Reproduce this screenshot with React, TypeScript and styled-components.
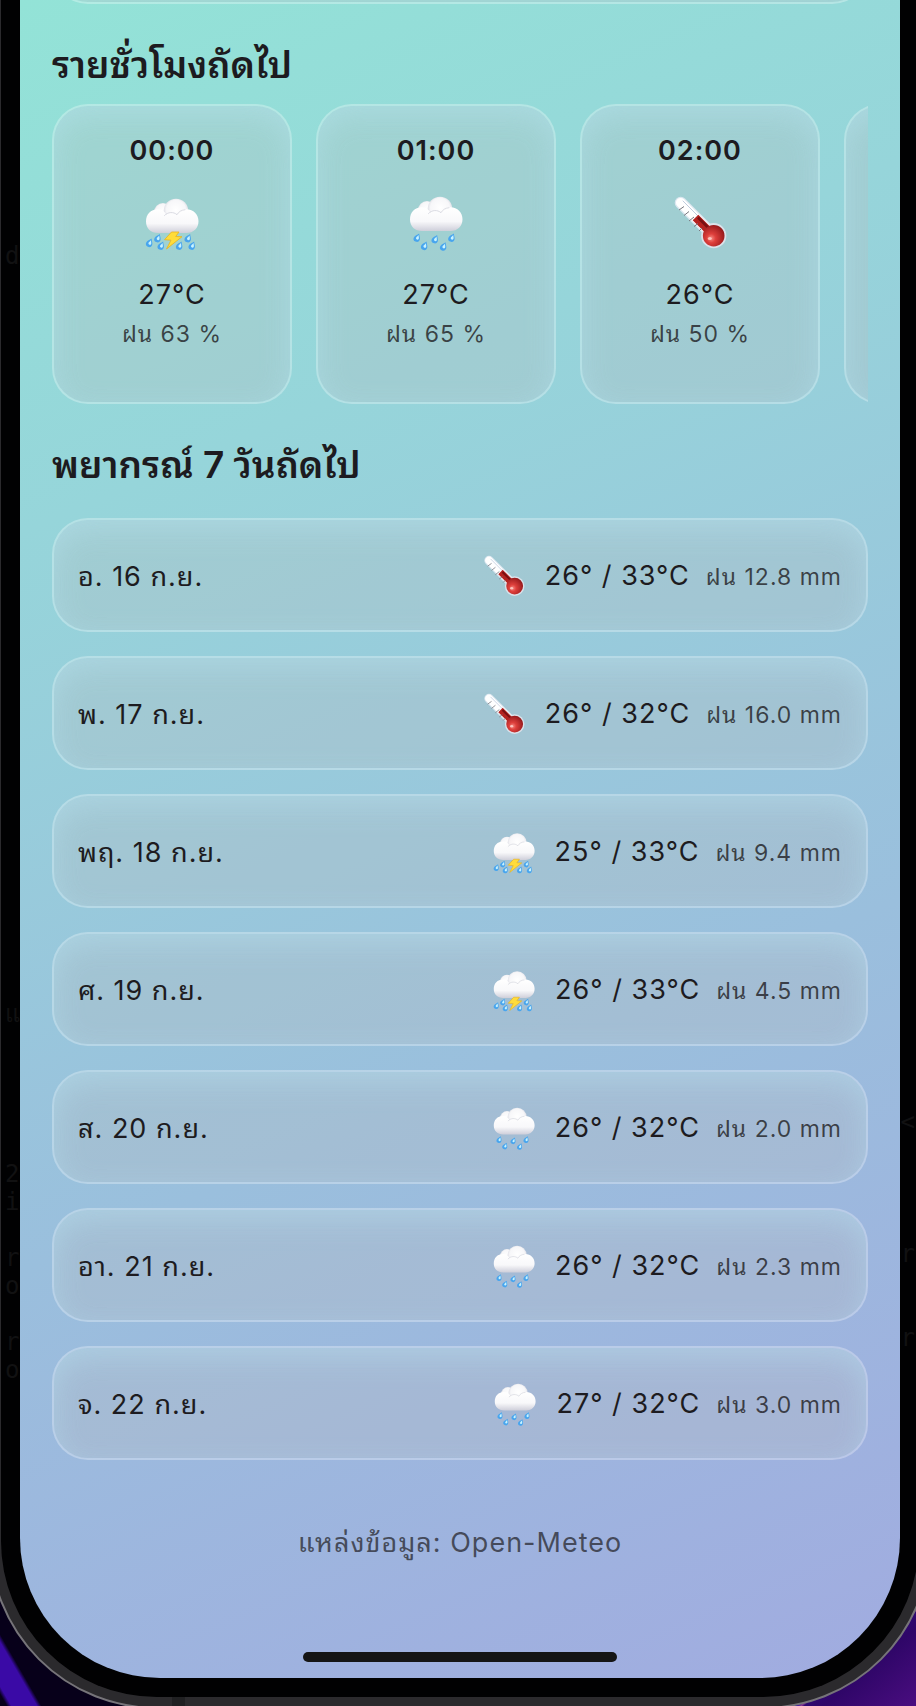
import React, { useId } from 'react';
import styled, { createGlobalStyle } from 'styled-components';

const INK = '#1d1b20';
const MUTED = 'rgba(29, 27, 32, 0.78)';

const GlobalStyle = createGlobalStyle`
  *, *::before, *::after { box-sizing: border-box; }
  body {
    margin: 0;
    background: #000;
    color: ${INK};
    font-family: Inter, "Noto Sans Thai Looped", Thonburi, Loma, Waree, Garuda, "Noto Sans", sans-serif;
  }
`;

const Desktop = styled.div`
  min-height: 100vh;
  overflow: hidden;
  background:
    linear-gradient(60deg, #07001a 0 6px, #3a0aa6 10px 32px, #07001a 36px) 0 0 / 50% 100% no-repeat,
    linear-gradient(320deg, #4a0d80 0, #2f0668 60px, #2e0870 72px, #8a3a90 74px, #2408a8 77px, #2408a8 110px, #0a0020 190px);
`;

const PhoneFrame = styled.div`
  margin: -201px -15px -3px -11px;
  padding: 210px 10px 10px;
  border: 2px solid #767479;
  border-radius: 168px;
  background:
    linear-gradient(#202022, #202022) 181px 100% / 13px 11px no-repeat,
    #2b2a2d;
`;

const Bezel = styled.div`
  position: relative;
  margin-top: -11px;
  padding: 0 19px 19px;
  border-radius: 0 0 156px 156px;
  background: #010102;
  overflow: hidden;
`;

const Reflection = styled.span<{ $top: number; $side?: 'left' | 'right' }>`
  position: absolute;
  top: ${({ $top }) => $top}px;
  ${({ $side = 'left' }) => $side}: 4px;
  color: #111112;
  font: 24px/28px "DejaVu Sans Mono", monospace;
  white-space: pre;
`;

const Screen = styled.main`
  position: relative;
  display: flex;
  flex-direction: column;
  padding: 0 32px 16px;
  border-radius: 0 0 140px 140px;
  overflow: hidden;
  background: linear-gradient(157deg, #93e3d7 0%, #96d5da 26%, #9abfdd 62%, #a1abe0 100%);
`;

const Glass = styled.div`
  border: 2px solid rgba(255, 255, 255, 0.3);
  border-radius: 36px;
  background: rgba(184, 188, 192, 0.3);
  background-clip: padding-box;
  box-shadow: inset 0 10px 28px rgba(185, 230, 245, 0.4);
`;

const CurrentCard = styled(Glass)`
  height: 80px;
  margin-top: -76px;
`;

const Heading = styled.h2`
  margin: 33px 0 11px;
  font-size: 37px;
  line-height: 56px;
  font-weight: 600;
`;

const HourStrip = styled.ul`
  display: flex;
  gap: 24px;
  margin: 0;
  padding: 0;
  overflow: hidden;
  list-style: none;
`;

const HourCard = styled(Glass).attrs({ as: 'li' })`
  flex: 0 0 240px;
  display: flex;
  flex-direction: column;
  align-items: center;
  height: 300px;
  padding-top: 25px;
  letter-spacing: 1px;
`;

const HourTime = styled.time`
  font-size: 27px;
  line-height: 40px;
  font-weight: 600;
`;

const HourIcon = styled.span`
  width: 54px;
  height: 54px;
  margin: 26px 0;
`;

const Temperature = styled.span`
  font-size: 27px;
  line-height: 36px;
  letter-spacing: 1px;
`;

const Rain = styled.span`
  color: ${MUTED};
  font-size: 23px;
  line-height: 42px;
  letter-spacing: 1px;
`;

const DayList = styled.ul`
  display: flex;
  flex-direction: column;
  gap: 24px;
  margin: 14px 0 0;
  padding: 0;
  list-style: none;
`;

const DayRow = styled(Glass).attrs({ as: 'li' })`
  display: flex;
  align-items: center;
  padding: 36px 24px 32px;
`;

const DayName = styled.span`
  flex: 1;
  font-size: 27px;
  line-height: 42px;
  letter-spacing: 1px;
`;

const DayIcon = styled.span`
  width: 42px;
  height: 42px;
  margin-right: 20px;
`;

const DayValues = styled.span`
  display: flex;
  align-items: baseline;
  gap: 16px;
`;

const Source = styled.footer`
  margin-top: 63px;
  color: rgba(29, 27, 32, 0.7);
  font-size: 27px;
  line-height: 40px;
  letter-spacing: 1px;
  text-align: center;
`;

const HomeIndicator = styled.div`
  align-self: center;
  width: 314px;
  height: 10px;
  margin-top: 89px;
  border-radius: 5px;
  background: #151515;
`;

const Drawing = styled.svg`
  display: block;
  width: 100%;
  height: 100%;
  overflow: visible;
`;

type Kind = 'storm' | 'rain' | 'thermometer';

const Cloud = ({ id }: { id: string }) => (
  <g>
    <defs>
      <linearGradient id={`${id}body`} x1="0" y1="0" x2="0" y2="1">
        <stop offset="0" stopColor="#ffffff" />
        <stop offset="0.6" stopColor="#f8f8fa" />
        <stop offset="1" stopColor="#cfcfda" />
      </linearGradient>
      <radialGradient id={`${id}puff`} cx="0.5" cy="0.45" r="0.55">
        <stop offset="0" stopColor="#ffffff" />
        <stop offset="0.7" stopColor="#f7f7f9" />
        <stop offset="1" stopColor="#d7d7e0" />
      </radialGradient>
    </defs>
    <circle cx="18" cy="15" r="9" fill={`url(#${id}puff)`} />
    <circle cx="31" cy="14" r="12.3" fill={`url(#${id}puff)`} />
    <path
      d="M13 12.3C5.5 12.3 1 17.5 1 24.5c0 7 5 11.5 12 11.5h28.500c7 0 12-5 12-11.800 0-7-5-12-12-12-4.500 0-8 2-10 5-3.500-2.500-8-2-10 .5-1.800-3.200-4.800-5.400-8.500-5.400z"
      fill={`url(#${id}body)`}
    />
    <path
      d="M19.500 18.500c3.500-3.800 9-3.800 12.500-.8 1.600-3 4.500-4.700 8-5"
      fill="none"
      stroke="#cdced8"
      strokeWidth="0.900"
      strokeLinecap="round"
      opacity="0.800"
    />
  </g>
);

const Drop = ({ x, y }: { x: number; y: number }) => (
  <g transform={`translate(${x} ${y}) rotate(24)`}>
    <path d="M0-4.500C1-2.500 3.200-.8 3.200 1.300A3.200 3.200 0 0 1-3.200 1.300C-3.200-.8-1-2.500 0-4.500z" fill="#48a5ee" />
    <path d="M.1-2.800C.8-1.400 1.900-.5 1.900.8A1.500 1.500 0 0 1-1 .9C-1-.4-.2-1.500.1-2.800z" fill="#c9f3ff" />
  </g>
);

const STORM_DROPS = [[4.700, 45.700], [13, 41], [16.300, 48.500], [34.700, 48.500], [43.300, 41], [47.300, 48.500]];
const RAIN_DROPS = [[8.300, 40.500], [26.300, 42], [43, 40.500], [15.700, 48.700], [34.700, 49.300]];

const WeatherIcon = ({ kind }: { kind: Kind }) => {
  const id = useId().replace(/[^a-zA-Z0-9]/g, '');
  if (kind === 'thermometer') {
    return (
      <Drawing viewBox="0 0 54 54" role="img" aria-label="thermometer">
        <defs>
          <radialGradient id={`${id}bulb`} cx="0.38" cy="0.62" r="0.7">
            <stop offset="0" stopColor="#f58a82" />
            <stop offset="0.3" stopColor="#de3f3b" />
            <stop offset="1" stopColor="#8d1518" />
          </radialGradient>
        </defs>
        <path d="M7.700 5.700L40.700 38.700" stroke="#dce7f0" strokeWidth="12" strokeLinecap="round" />
        <circle cx="40.700" cy="38.700" r="12.600" fill="#dbe2ea" />
        <path d="M7.700 5.700L38 36" stroke="#ffffff" strokeWidth="9.500" strokeLinecap="round" />
        <path d="M10 4L33 27" stroke="#b9c6da" strokeWidth="0.900" strokeLinecap="round" />
        <path d="M22.500 20.500L38 36" stroke="#b5221f" strokeWidth="8" />
        <path d="M25 20.500L38 33.500" stroke="#791012" strokeWidth="2.500" />
        <path d="M6 13l5-3.500M11 18.500l5-4M16 24l5-4M21 29.500l4-3M26 34l3-3" stroke="#77777e" strokeWidth="1" />
        <circle cx="40.700" cy="38.700" r="10.800" fill={`url(#${id}bulb)`} />
        <ellipse cx="36.800" cy="41.500" rx="2" ry="1.600" fill="#ffd0ca" opacity="0.850" />
      </Drawing>
    );
  }
  const storm = kind === 'storm';
  return (
    <Drawing viewBox="0 0 54 54" role="img" aria-label={kind}>
      <g transform={storm ? undefined : 'translate(0 -2)'}>
        <Cloud id={id} />
      </g>
      {(storm ? STORM_DROPS : RAIN_DROPS).map(([x, y]) => (
        <Drop key={`${x}-${y}`} x={x} y={y} />
      ))}
      {storm && (
        <path
          d="M26.500 35L34 35L30.700 39.500L37 39.700L21.500 52L26 43.200L19.500 42.700z"
          fill="#ffdc3a"
          stroke="#e9b21e"
          strokeWidth="0.800"
          strokeLinejoin="round"
        />
      )}
    </Drawing>
  );
};

const HOURS: { time: string; kind: Kind; temp: string; rain: string }[] = [
  { time: '00:00', kind: 'storm', temp: '27°C', rain: 'ฝน 63 %' },
  { time: '01:00', kind: 'rain', temp: '27°C', rain: 'ฝน 65 %' },
  { time: '02:00', kind: 'thermometer', temp: '26°C', rain: 'ฝน 50 %' },
];

const DAYS: { day: string; kind: Kind; temp: string; rain: string }[] = [
  { day: 'อ. 16 ก.ย.', kind: 'thermometer', temp: '26° / 33°C', rain: 'ฝน 12.8 mm' },
  { day: 'พ. 17 ก.ย.', kind: 'thermometer', temp: '26° / 32°C', rain: 'ฝน 16.0 mm' },
  { day: 'พฤ. 18 ก.ย.', kind: 'storm', temp: '25° / 33°C', rain: 'ฝน 9.4 mm' },
  { day: 'ศ. 19 ก.ย.', kind: 'storm', temp: '26° / 33°C', rain: 'ฝน 4.5 mm' },
  { day: 'ส. 20 ก.ย.', kind: 'rain', temp: '26° / 32°C', rain: 'ฝน 2.0 mm' },
  { day: 'อา. 21 ก.ย.', kind: 'rain', temp: '26° / 32°C', rain: 'ฝน 2.3 mm' },
  { day: 'จ. 22 ก.ย.', kind: 'rain', temp: '27° / 32°C', rain: 'ฝน 3.0 mm' },
];

const REFLECTIONS: { top: number; text: string; side?: 'left' | 'right' }[] = [
  { top: 242, text: 'd' },
  { top: 1000, text: 'แ' },
  { top: 1160, text: '2' },
  { top: 1188, text: 'i' },
  { top: 1244, text: 'r' },
  { top: 1272, text: 'o' },
  { top: 1328, text: 'r' },
  { top: 1356, text: 'o' },
  { top: 1108, text: '<', side: 'right' },
  { top: 1240, text: 'r', side: 'right' },
  { top: 1324, text: 'r', side: 'right' },
];

export default function App() {
  return (
    <Desktop>
      <GlobalStyle />
      <PhoneFrame>
        <Bezel>
          {REFLECTIONS.map(({ top, text, side }) => (
            <Reflection key={`${top}`} $top={top} $side={side} aria-hidden="true">
              {text}
            </Reflection>
          ))}
          <Screen>
            <CurrentCard />
            <Heading>รายชั่วโมงถัดไป</Heading>
            <HourStrip>
              {HOURS.map((hour) => (
                <HourCard key={hour.time}>
                  <HourTime>{hour.time}</HourTime>
                  <HourIcon>
                    <WeatherIcon kind={hour.kind} />
                  </HourIcon>
                  <Temperature>{hour.temp}</Temperature>
                  <Rain>{hour.rain}</Rain>
                </HourCard>
              ))}
              <HourCard />
            </HourStrip>
            <Heading>พยากรณ์ 7 วันถัดไป</Heading>
            <DayList>
              {DAYS.map((row) => (
                <DayRow key={row.day}>
                  <DayName>{row.day}</DayName>
                  <DayIcon>
                    <WeatherIcon kind={row.kind} />
                  </DayIcon>
                  <DayValues>
                    <Temperature>{row.temp}</Temperature>
                    <Rain>{row.rain}</Rain>
                  </DayValues>
                </DayRow>
              ))}
            </DayList>
            <Source>แหล่งข้อมูล: Open-Meteo</Source>
            <HomeIndicator />
          </Screen>
        </Bezel>
      </PhoneFrame>
    </Desktop>
  );
}
